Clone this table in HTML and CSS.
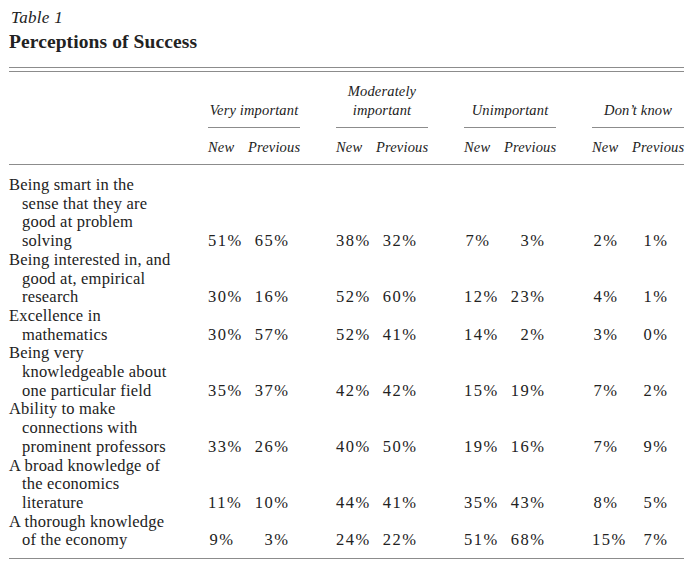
FILE: index.html
```html
<!DOCTYPE html>
<html lang="en">
<head>
<meta charset="utf-8">
<title>Table 1 — Perceptions of Success</title>
<link rel="stylesheet" href="styles.css">
</head>
<body>
<div class="page">
  <div class="tbl-label">Table 1</div>
  <h1 class="tbl-title">Perceptions of Success</h1>
  <div class="rule-double"></div>
  <table class="data">
    <colgroup>
      <col class="c-label">
      <col class="c-new"><col class="c-prev"><col class="c-sp">
      <col class="c-new"><col class="c-prev"><col class="c-sp">
      <col class="c-new"><col class="c-prev"><col class="c-sp">
      <col class="c-new"><col class="c-prev">
    </colgroup>
    <thead>
      <tr class="grp-row">
        <th></th>
        <th class="grp" colspan="2">Very important</th><th></th>
        <th class="grp" colspan="2">Moderately<br>important</th><th></th>
        <th class="grp" colspan="2">Unimportant</th><th></th>
        <th class="grp" colspan="2">Don’t know</th>
      </tr>
      <tr class="sub-row">
        <th></th>
        <th class="h-new">New</th><th class="h-prev">Previous</th><th></th>
        <th class="h-new">New</th><th class="h-prev">Previous</th><th></th>
        <th class="h-new">New</th><th class="h-prev">Previous</th><th></th>
        <th class="h-new">New</th><th class="h-prev h-last">Previous</th>
      </tr>
    </thead>
    <tbody>
      <tr class="first">
        <td class="label">Being smart in the<br>sense that they are<br>good at problem<br>solving</td>
        <td class="n-new">51%</td><td class="n-prev">65%</td><td></td>
        <td class="n-new">38%</td><td class="n-prev">32%</td><td></td>
        <td class="n-new">7%</td><td class="n-prev">3%</td><td></td>
        <td class="n-new">2%</td><td class="n-prev n-last">1%</td>
      </tr>
      <tr>
        <td class="label">Being interested in, and<br>good at, empirical<br>research</td>
        <td class="n-new">30%</td><td class="n-prev">16%</td><td></td>
        <td class="n-new">52%</td><td class="n-prev">60%</td><td></td>
        <td class="n-new">12%</td><td class="n-prev">23%</td><td></td>
        <td class="n-new">4%</td><td class="n-prev n-last">1%</td>
      </tr>
      <tr>
        <td class="label">Excellence in<br>mathematics</td>
        <td class="n-new">30%</td><td class="n-prev">57%</td><td></td>
        <td class="n-new">52%</td><td class="n-prev">41%</td><td></td>
        <td class="n-new">14%</td><td class="n-prev">2%</td><td></td>
        <td class="n-new">3%</td><td class="n-prev n-last">0%</td>
      </tr>
      <tr>
        <td class="label">Being very<br>knowledgeable about<br>one particular field</td>
        <td class="n-new">35%</td><td class="n-prev">37%</td><td></td>
        <td class="n-new">42%</td><td class="n-prev">42%</td><td></td>
        <td class="n-new">15%</td><td class="n-prev">19%</td><td></td>
        <td class="n-new">7%</td><td class="n-prev n-last">2%</td>
      </tr>
      <tr>
        <td class="label">Ability to make<br>connections with<br>prominent professors</td>
        <td class="n-new">33%</td><td class="n-prev">26%</td><td></td>
        <td class="n-new">40%</td><td class="n-prev">50%</td><td></td>
        <td class="n-new">19%</td><td class="n-prev">16%</td><td></td>
        <td class="n-new">7%</td><td class="n-prev n-last">9%</td>
      </tr>
      <tr>
        <td class="label">A broad knowledge of<br>the economics<br>literature</td>
        <td class="n-new">11%</td><td class="n-prev">10%</td><td></td>
        <td class="n-new">44%</td><td class="n-prev">41%</td><td></td>
        <td class="n-new">35%</td><td class="n-prev">43%</td><td></td>
        <td class="n-new">8%</td><td class="n-prev n-last">5%</td>
      </tr>
      <tr class="last">
        <td class="label">A thorough knowledge<br>of the economy</td>
        <td class="n-new">9%</td><td class="n-prev">3%</td><td></td>
        <td class="n-new">24%</td><td class="n-prev">22%</td><td></td>
        <td class="n-new">51%</td><td class="n-prev">68%</td><td></td>
        <td class="n-new">15%</td><td class="n-prev n-last">7%</td>
      </tr>
    </tbody>
  </table>
</div>
</body>
</html>
```

FILE: styles.css
```css
html, body {
  margin: 0;
  padding: 0;
  background: #ffffff;
}

body {
  font-family: "Liberation Serif", "Times New Roman", serif;
  color: #222222;
}

.page {
  padding: 7px 0 0 9px;
  width: 675px;
}

.tbl-label {
  font-style: italic;
  font-size: 17px;
  line-height: 22px;
  padding-left: 2px;
  letter-spacing: 0.3px;
}

.tbl-title {
  margin: 2px 0 0 0;
  font-size: 19.5px;
  line-height: 22px;
  font-weight: bold;
  letter-spacing: 0.1px;
}

.rule-double {
  margin-top: 14px;
  height: 3px;
  border-top: 1px solid #8c8c8c;
  border-bottom: 1px solid #8c8c8c;
}

.data {
  width: 675px;
  table-layout: fixed;
  border-collapse: separate;
  border-spacing: 0;
  font-size: 16.5px;
  line-height: 18.7px;
}

.c-label { width: 199px; }
.c-new { width: 40px; }
.c-prev { width: 52px; }
.c-sp { width: 36px; }

.data th,
.data td {
  padding: 0;
  font-weight: normal;
  vertical-align: bottom;
}

.data th {
  font-style: italic;
  font-size: 14.5px;
  letter-spacing: 0.15px;
}

.grp-row th {
  padding-top: 10px;
  padding-bottom: 7.6px;
}

.grp-row th.grp {
  text-align: center;
  border-bottom: 1px solid #8c8c8c;
}

.sub-row th {
  padding-top: 10px;
  padding-bottom: 7.3px;
  border-bottom: 1px solid #8c8c8c;
}

.h-new {
  text-align: right;
  padding-right: 14px !important;
}

.h-prev {
  text-align: right;
}

.h-last {
  padding-right: 1px !important;
}

.label {
  padding-left: 13px !important;
  text-indent: -13px;
  letter-spacing: 0.2px;
  white-space: nowrap;
}

.n-new,
.n-prev {
  text-align: right;
  font-size: 16.5px;
  letter-spacing: 1.5px;
}

.n-new { padding-right: 13.5px !important; }
.n-prev { padding-right: 10.5px !important; }
.n-last { padding-right: 15.5px !important; }

tr.first td {
  padding-top: 11px;
}

tr.last td {
  padding-bottom: 8px;
  border-bottom: 1px solid #8c8c8c;
}
```
